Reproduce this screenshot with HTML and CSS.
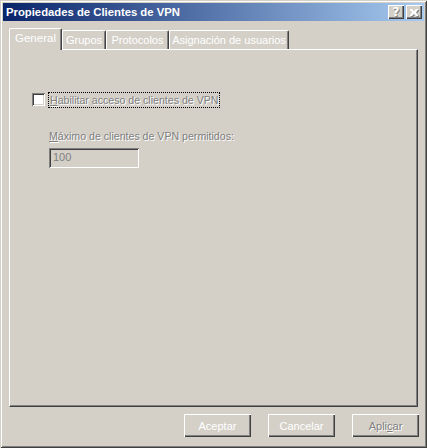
FILE: index.html
```html
<!DOCTYPE html>
<html>
<head>
<meta charset="utf-8">
<link rel="stylesheet" href="styles.css">
</head>
<body>
<div class="window">
  <div class="titlebar">
    <span class="title">Propiedades de Clientes de VPN</span>
    <div class="caption-btns">
      <div class="cbtn"><span class="q">?</span></div>
      <div class="cbtn">
        <svg width="8" height="7" viewBox="0 0 8 7"><path d="M0 0h2l2 2 2-2h2v1l-2 2.5 2 2.5v1h-2l-2-2-2 2h-2v-1l2-2.5-2-2.5z" fill="#fff"/></svg>
      </div>
    </div>
  </div>
  <div class="tabs">
    <div class="tab active w-general">General</div>
    <div class="tab w-grupos">Grupos</div>
    <div class="tab w-proto">Protocolos</div>
    <div class="tab w-asig">Asignación de usuarios</div>
  </div>
  <div class="panel">
    <div class="check-row">
      <span class="checkbox"></span>
      <span class="label focus"><u>H</u>abilitar acceso de clientes de VPN</span>
    </div>
    <div class="field">
      <div class="label dis"><u>M</u>áximo de clientes de VPN permitidos:</div>
      <div class="input dis">100</div>
    </div>
  </div>
  <div class="buttons">
    <div class="btn light">Aceptar</div>
    <div class="btn light">Cancelar</div>
    <div class="btn dis">Apli<u>c</u>ar</div>
  </div>
</div>
</body>
</html>
```
FILE: styles.css
```css
* { box-sizing: border-box; }
html, body { margin: 0; padding: 0; }
body {
  background: #d4d0c8;
  font-family: "Liberation Sans", Arial, sans-serif;
  font-size: 11px;
  color: #000;
}
.window {
  width: 427px;
  height: 448px;
  padding: 3px;
  background: #d4d0c8;
  box-shadow: inset 1px 1px 0 #d4d0c8, inset -1px -1px 0 #404040, inset 2px 2px 0 #fff, inset -2px -2px 0 #808080;
  display: flex;
  flex-direction: column;
}
.titlebar {
  height: 18px;
  background: linear-gradient(to right, #0a246a, #a6caf0);
  display: flex;
  align-items: center;
  justify-content: space-between;
  padding-left: 3px;
  padding-right: 2px;
}
.title {
  color: #fff;
  font-weight: bold;
  font-size: 11.3px;
}
.caption-btns { display: flex; gap: 2px; }
.cbtn {
  width: 16px;
  height: 14px;
  background: #d4d0c8;
  box-shadow: inset 1px 1px 0 #fff, inset -1px -1px 0 #404040, inset -2px -2px 0 #808080;
  display: flex;
  align-items: center;
  justify-content: center;
}
.cbtn .q {
  color: #fff;
  font-weight: bold;
  font-size: 12px;
  line-height: 12px;
  text-shadow: 1px 1px 0 #808080;
  font-family: "DejaVu Sans", sans-serif;
}
.cbtn svg { filter: drop-shadow(1px 1px 0 #808080); }
.tabs {
  display: flex;
  margin-top: 7px;
  margin-left: 6px;
  height: 21px;
  align-items: flex-end;
  position: relative;
  z-index: 1;
}
.tab {
  height: 19px;
  padding-top: 3px;
  text-align: center;
  color: #fff;
  border-left: 1px solid #fff;
  border-top: 1px solid #fff;
  border-right: 1px solid #404040;
  box-shadow: inset -1px 0 0 #808080;
  border-radius: 2px 2px 0 0;
  font-size: 11px;
  white-space: nowrap;
}
.w-general { width: 53px; }
.w-grupos { width: 44px; }
.w-proto { width: 63px; }
.w-asig { width: 120px; }
.tab.active {
  padding-top: 3px;
  margin-bottom: -1px;
  background: #d4d0c8;
  height: 22px;
  font-size: 11.5px;
}
.panel {
  margin-left: 6px;
  width: 409px;
  height: 358px;
  border-left: 1px solid #fff;
  border-top: 1px solid #fff;
  border-right: 1px solid #404040;
  border-bottom: 1px solid #404040;
  box-shadow: inset -1px -1px 0 #808080;
  padding: 42px 0 0 22px;
}
.check-row {
  display: flex;
  align-items: center;
  height: 15px;
}
.checkbox {
  width: 13px;
  height: 13px;
  background: #fff;
  box-shadow: inset 1px 1px 0 #808080, inset -1px -1px 0 #fff, inset 2px 2px 0 #404040, inset -2px -2px 0 #d4d0c8;
  margin-right: 4px;
}
.label {
  color: #808080;
  text-shadow: 1px 1px 0 #fff;
  font-size: 10.6px;
}
.focus {
  outline: 1px dotted #000;
  padding: 0 1px;
  line-height: 14px;
}
.field {
  margin-left: 17px;
  margin-top: 23px;
}
.input {
  margin-top: 6px;
  width: 90px;
  height: 20px;
  padding: 3px 4px;
  color: #808080;
  font-size: 11px;
  box-shadow: inset 1px 1px 0 #808080, inset -1px -1px 0 #fff, inset 2px 2px 0 #404040, inset -2px -2px 0 #d4d0c8;
}
.buttons {
  display: flex;
  justify-content: flex-end;
  gap: 17px;
  margin-top: 7px;
  padding-right: 5px;
}
.btn {
  width: 67px;
  height: 23px;
  display: flex;
  align-items: center;
  justify-content: center;
  box-shadow: inset 1px 1px 0 #fff, inset -1px -1px 0 #404040, inset -2px -2px 0 #808080;
  font-size: 11px;
}
.btn.light { color: #fff; }
.btn.dis { color: #808080; text-shadow: 1px 1px 0 #fff; }
```
